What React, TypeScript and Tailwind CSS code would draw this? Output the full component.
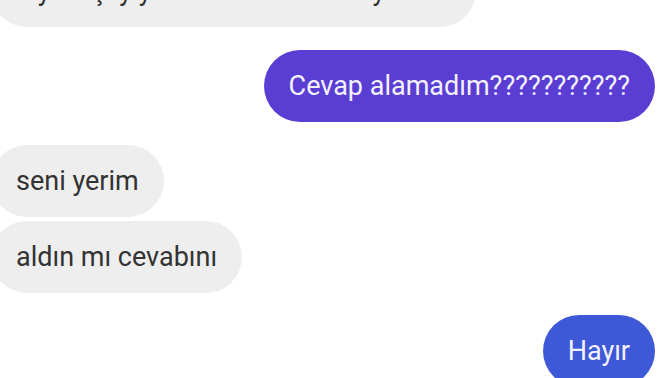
import React from 'react';

type Msg = { id: number; text: string; mine: boolean; color?: string; extra?: string };

const MESSAGES: Msg[] = [
  { id: 1, text: 'diye kıçı yiyecem sonradan söylersin', mine: false, extra: '-mt-[45px]' },
  { id: 2, text: 'Cevap alamadım???????????', mine: true, color: 'bg-[#5a3ed4]', extra: 'mt-[23px]' },
  { id: 3, text: 'seni yerim', mine: false, extra: 'mt-[23px]' },
  { id: 4, text: 'aldın mı cevabını', mine: false, extra: 'mt-[4px]' },
  { id: 5, text: 'Hayır', mine: true, color: 'bg-[#3d59d7]', extra: 'mt-[22px]' },
];

const Bubble: React.FC<{ msg: Msg }> = ({ msg }) => (
  <div className={`flex ${msg.mine ? 'justify-end pr-[17px]' : 'justify-start -ml-[9px]'} ${msg.extra ?? ''}`}>
    <div
      className={`h-[72px] flex items-center rounded-full px-[25px] text-[27px] whitespace-nowrap ${
        msg.mine ? `${msg.color} text-[#f3f1fb]` : 'bg-[#eeeeee] text-[#333333]'
      }`}
    >
      {msg.text}
    </div>
  </div>
);

export default function App() {
  return (
    <div className="w-[672px] h-[378px] overflow-hidden bg-white font-['Roboto','Liberation_Sans',sans-serif]">
      <div className="flex flex-col">
        {MESSAGES.map(m => (
          <Bubble key={m.id} msg={m} />
        ))}
      </div>
    </div>
  );
}
